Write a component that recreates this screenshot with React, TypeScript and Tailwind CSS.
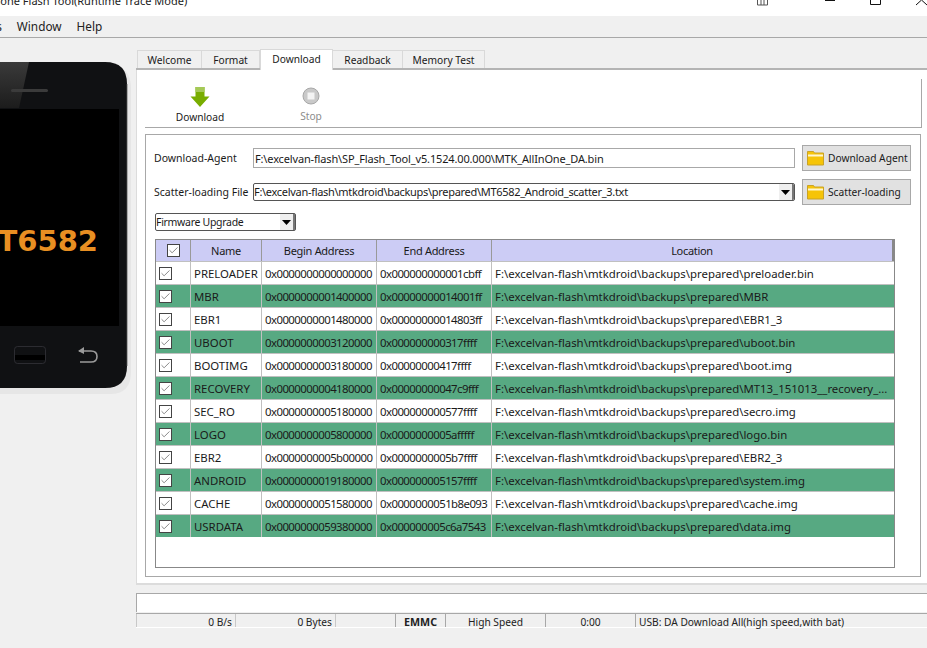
import React from 'react';
import { Check } from 'lucide-react';

const base = 'F:\\excelvan-flash\\mtkdroid\\backups\\prepared\\';

const rows = [
  ['PRELOADER', '0x0000000000000000', '0x000000000001cbff', 'preloader.bin'],
  ['MBR', '0x0000000001400000', '0x00000000014001ff', 'MBR'],
  ['EBR1', '0x0000000001480000', '0x00000000014803ff', 'EBR1_3'],
  ['UBOOT', '0x0000000003120000', '0x000000000317ffff', 'uboot.bin'],
  ['BOOTIMG', '0x0000000003180000', '0x00000000417ffff', 'boot.img'],
  ['RECOVERY', '0x0000000004180000', '0x00000000047c9fff', 'MT13_151013__recovery_...'],
  ['SEC_RO', '0x0000000005180000', '0x000000000577ffff', 'secro.img'],
  ['LOGO', '0x0000000005800000', '0x0000000005afffff', 'logo.bin'],
  ['EBR2', '0x0000000005b00000', '0x0000000005b7ffff', 'EBR2_3'],
  ['ANDROID', '0x0000000019180000', '0x000000005157ffff', 'system.img'],
  ['CACHE', '0x0000000051580000', '0x0000000051b8e093', 'cache.img'],
  ['USRDATA', '0x0000000059380000', '0x000000005c6a7543', 'data.img'],
];

const gridCols = 'grid grid-cols-[35px_71px_115px_115px_1fr]';

function CheckBox() {
  return (
    <span className="w-[13px] h-[13px] border border-[#444] bg-white flex items-center justify-center">
      <Check size={11} strokeWidth={1.5} className="text-[#555]" />
    </span>
  );
}

function Folder() {
  return (
    <svg width="17" height="16" viewBox="0 0 17 16" className="shrink-0">
      <path d="M.5 1.500h6l1 1.500h9v12H.5z" fill="#f6c407" stroke="#c9a227" />
      <rect x="1" y="4.500" width="15" height="2" fill="#fff6cf" />
    </svg>
  );
}

function ComboArrow() {
  return (
    <span className="w-[15px] h-full shrink-0 bg-[#efefef] border-r-2 border-[#777] flex items-center justify-center">
      <svg width="9" height="5" viewBox="0 0 9 5"><path d="M0 0h9L4.500 5z" fill="#000" /></svg>
    </span>
  );
}

function Phone() {
  return (
    <svg width="136" height="340" viewBox="0 0 136 340">
      <defs>
        <linearGradient id="shade" x1="0" y1="0" x2="0" y2="1">
          <stop offset="0" stopColor="#3a3a3a" />
          <stop offset="1" stopColor="#1c1c1c" />
        </linearGradient>
      </defs>
      <path d="M-20 4H110Q131 4 131 26V310Q131 332 110 332H-20Z" fill="#e6e6e6" />
      <path d="M-20 0H105Q127 0 127 22V304Q127 326 105 326H-20Z" fill="#101113" />
      <path d="M127 22V304" stroke="#555" strokeWidth="0.8" fill="none" />
      <path d="M0 0H29L19 46H0Z" fill="url(#shade)" />
      <rect x="11" y="27" width="37" height="3" rx="1.5" fill="#3b3b3b" />
      <rect x="0" y="47" width="119" height="217" fill="#000" />
      <text x="98" y="189" textAnchor="end" fontFamily="'DejaVu Sans', sans-serif" fontWeight="700" fontSize="29" fill="#e88f22">MT6582</text>
      <rect x="14.5" y="284.5" width="31" height="17" rx="3" fill="#101113" stroke="#33343a" strokeWidth="0.8" />
      <rect x="15" y="293" width="30" height="5" fill="#000" />
      <path d="M79 289h12q6 0 6 5.500t-6 5.500h-11" fill="none" stroke="#9a9a9a" strokeWidth="1.600" />
      <path d="M84 285l-6 4 6 3z" fill="#9a9a9a" />
    </svg>
  );
}

export default function App() {
  return (
    <div className="w-[927px] h-[648px] overflow-hidden flex flex-col bg-[#f0f0f0] text-[10.2px] text-[#1a1a1a] font-['Noto_Sans',sans-serif]">
      {/* title bar, cut off by the crop */}
      <div className="h-4 shrink-0 bg-white overflow-hidden flex items-end justify-between text-[11px] text-[#222]">
        <span className="-ml-[47px] mb-[6px] leading-[18px] whitespace-nowrap">Smart Phone Flash Tool(Runtime Trace Mode)</span>
        <svg width="170" height="16" viewBox="0 0 170 16" className="shrink-0">
          <path d="M.5 0v5h10V0M4 0v5M7 0v5" fill="none" stroke="#555" />
          <path d="M68 .5h10" stroke="#111" />
          <path d="M113.500 0v4.500h10V0" fill="none" stroke="#111" />
          <path d="M159 5l5.500-5 5.500 5" fill="none" stroke="#111" />
        </svg>
      </div>

      {/* menu */}
      <div className="h-[22px] shrink-0 flex items-center gap-[15px] border-b border-[#a8a8a8] text-[11.8px] text-[#222] -ml-[42px]">
        <span>Options</span>
        <span>Window</span>
        <span>Help</span>
      </div>

      <div className="flex-1 flex min-h-0">
        <aside className="w-[136px] shrink-0 pt-6 overflow-hidden">
          <Phone />
        </aside>

        <main className="flex-1 min-w-0 flex flex-col pt-[11px]">
          {/* tabs */}
          <div className="h-[21px] flex items-end pl-px border-b-2 border-[#b4b4b4]">
            <div className="h-[18px] w-[65px] pt-[2px] flex items-center justify-center border-x border-t border-[#d9d9d9]">Welcome</div>
            <div className="h-[18px] w-[58px] pt-[2px] flex items-center justify-center border-r border-t border-[#d9d9d9]">Format</div>
            <div className="h-[21px] -mb-[2px] w-[73px] flex items-center justify-center bg-white border-x border-t border-[#d9d9d9]">Download</div>
            <div className="h-[18px] w-[70px] pt-[2px] flex items-center justify-center border-r border-t border-[#d9d9d9]">Readback</div>
            <div className="h-[18px] w-[82px] pt-[2px] flex items-center justify-center border-r border-t border-[#d9d9d9]">Memory Test</div>
          </div>

          {/* tab page */}
          <div className="h-[515px] bg-white border-b-2 border-l border-[#dcdcdc] pl-[8px] pr-[6px] pt-[9px] flex flex-col">
            <div className="h-[49px] flex items-start border-r border-b border-[#a8a8a8] -mr-px">
              <div className="w-[110px] flex flex-col items-center pt-[8px]">
                <svg width="20" height="20" viewBox="0 0 20 20">
                  <path d="M5.500 0h9v9.500h5L10 20 .5 9.500h5z" fill="#78ad00" />
                  <rect x="5.500" y="0" width="9" height="5" fill="#a5c957" />
                </svg>
                <span className="leading-4 mt-[2px]">Download</span>
              </div>
              <div className="w-[112px] flex flex-col items-center pt-[8px] text-[#8c8c8c]">
                <svg width="18" height="20" viewBox="0 0 18 20">
                  <circle cx="9" cy="9" r="8" fill="#c9c9c9" stroke="#a8a8a8" />
                  <rect x="5.500" y="5.500" width="7" height="7" fill="#f4f4f4" />
                </svg>
                <span className="leading-4 mt-[1px]">Stop</span>
              </div>
            </div>

            <div className="h-[443px] mt-[6px] border border-[#a8a8a8] pl-2 flex flex-col">
              <div className="mt-[10px] flex items-center h-[26px]">
                <span className="w-[99px] shrink-0 text-[10.5px] pt-px">Download-Agent</span>
                <div className="w-[542px] h-5 border border-[#a8a8a8] flex items-center pl-px pt-[2px] text-[11px] tracking-[-0.15px] whitespace-nowrap overflow-hidden">F:\excelvan-flash\SP_Flash_Tool_v5.1524.00.000\MTK_AllInOne_DA.bin</div>
                <button className="ml-[7px] w-[109px] h-[26px] border border-[#a8a8a8] bg-[#e1e1e1] flex items-center gap-[4px] pl-[4px] whitespace-nowrap text-[10.2px]"><Folder /><span className="pt-px">Download Agent</span></button>
              </div>
              <div className="mt-2 flex items-center h-[26px]">
                <span className="w-[99px] shrink-0 text-[10.5px] whitespace-nowrap pt-px">Scatter-loading File</span>
                <div className="w-[542px] h-[18px] border border-[#555] rounded-[2px] flex items-center justify-between text-[11px] tracking-[-0.3px] whitespace-nowrap overflow-hidden">
                  <span>{base}MT6582_Android_scatter_3.txt</span>
                  <ComboArrow />
                </div>
                <button className="ml-[7px] w-[109px] h-[26px] border border-[#a8a8a8] bg-[#e1e1e1] flex items-center gap-[4px] pl-[4px] whitespace-nowrap text-[10.2px]"><Folder /><span className="pt-px">Scatter-loading</span></button>
              </div>
              <div className="mt-2 w-[141px] ml-px h-[18px] border border-[#555] rounded-[2px] flex items-center justify-between text-[10.5px] tracking-[-0.3px]">
                <span className="pt-px">Firmware Upgrade</span>
                <ComboArrow />
              </div>

              {/* partition table */}
              <div className="mt-2 ml-px w-[740px] h-[329px] border border-[#888]">
                <div className={`${gridCols} h-[21px] bg-[#ccccf5] border-r-2 border-[#888] text-[11px] tracking-[-0.3px]`}>
                  <div className="flex items-center justify-center border-r border-[#999]"><CheckBox /></div>
                  {['Name', 'Begin Address', 'End Address', 'Location'].map((h) => (
                    <div key={h} className="flex items-center justify-center pt-px border-r last:border-r-0 border-[#999]">{h}</div>
                  ))}
                </div>
                {rows.map((r, i) => (
                  <div key={r[0]} className={`${gridCols} h-[23px] border-t border-[#c0c0c0] whitespace-nowrap text-[11.4px] ${i % 2 ? 'bg-[#57a982]' : 'bg-white'}`}>
                    <div className="flex items-center pl-[3px] border-r border-[#c0c0c0]"><CheckBox /></div>
                    <div className="flex items-center pl-[3px] pt-px border-r border-[#c0c0c0]">{r[0]}</div>
                    <div className="flex items-center pl-[3px] pt-px border-r border-[#c0c0c0] tracking-[-0.55px]">{r[1]}</div>
                    <div className="flex items-center pl-[3px] pt-px border-r border-[#c0c0c0] tracking-[-0.55px]">{r[2]}</div>
                    <div className="flex items-center pl-[3px] pt-px">{base}{r[3]}</div>
                  </div>
                ))}
              </div>
            </div>
          </div>

          {/* status */}
          <div className="mt-[8px] h-[19px] bg-white border-t border-l border-[#a8a8a8] shrink-0" />
          <div className="mt-px h-[15px] shrink-0 flex border-t border-b border-t-[#a8a8a8] border-b-white text-[#222] leading-[16px]">
            <div className="w-[100px] border-x border-[#c8c8c8] text-right pr-[3px]">0 B/s</div>
            <div className="w-[100px] border-r border-[#c8c8c8] text-right pr-[3px]">0 Bytes</div>
            <div className="w-[60px] border-r border-[#a8a8a8]" />
            <div className="w-[50px] border-r border-[#a8a8a8] text-center font-bold text-[10.7px]">EMMC</div>
            <div className="w-[100px] border-r border-[#a8a8a8] text-center">High Speed</div>
            <div className="w-[90px] border-r border-[#a8a8a8] text-center">0:00</div>
            <div className="flex-1 pl-[3px] whitespace-nowrap">USB: DA Download All(high speed,with bat)</div>
          </div>
        </main>
      </div>
    </div>
  );
}
